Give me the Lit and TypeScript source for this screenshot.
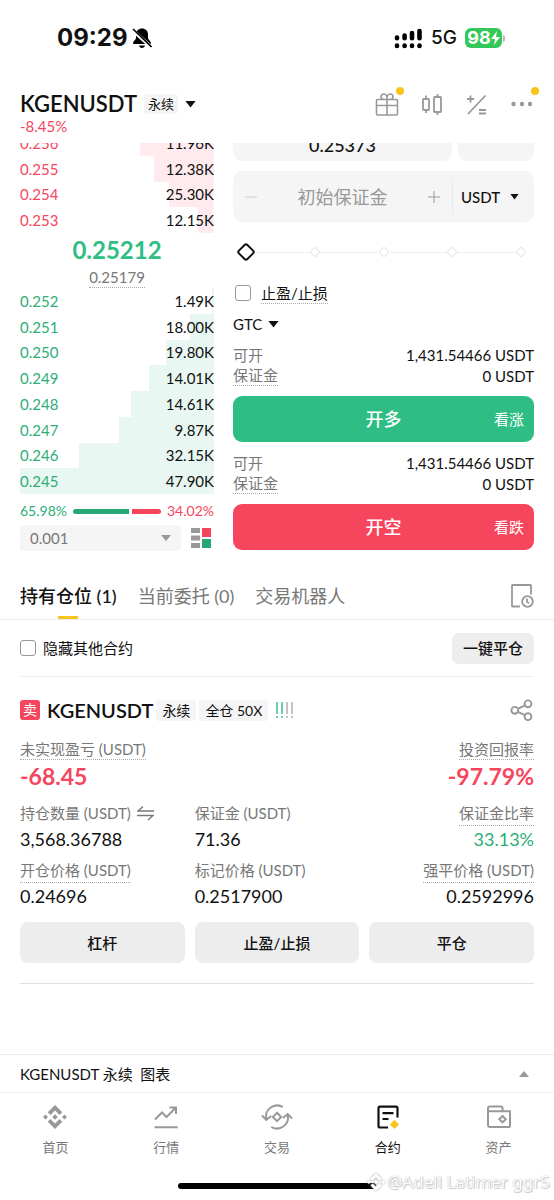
import { LitElement, html, css, svg, nothing } from "lit";
import { customElement, property, state } from "lit/decorators.js";
import { classMap } from "lit/directives/class-map.js";

type Level = { price: string; size: string; depth: number };

const asks: Level[] = [
  { price: "0.256", size: "11.96K", depth: 38 },
  { price: "0.255", size: "12.38K", depth: 31 },
  { price: "0.254", size: "25.30K", depth: 23 },
  { price: "0.253", size: "12.15K", depth: 8 },
];

const bids: Level[] = [
  { price: "0.252", size: "1.49K", depth: 1 },
  { price: "0.251", size: "18.00K", depth: 12.5 },
  { price: "0.250", size: "19.80K", depth: 25 },
  { price: "0.249", size: "14.01K", depth: 33.5 },
  { price: "0.248", size: "14.61K", depth: 43 },
  { price: "0.247", size: "9.87K", depth: 49 },
  { price: "0.246", size: "32.15K", depth: 69.5 },
  { price: "0.245", size: "47.90K", depth: 100 },
];

const icons = {
  gift: svg`<g fill="none" stroke="#999" stroke-width="1.6"><rect x="1.5" y="7.5" width="21" height="15.5" rx="1"/><path d="M1.5 13.5h21M12 7.5V23"/><path d="M12 7.500C12.400 4 10.800 2 9 2S6 3.300 6 4.700 7 7.200 8.500 7.400M12 7.500C11.600 4 13.200 2 15 2s3 1.300 3 2.700-1 2.500-2.500 2.700"/></g>`,
  candles: svg`<g fill="none" stroke="#999" stroke-width="1.8"><rect x="3" y="7" width="6" height="11" rx=".8"/><rect x="14" y="5" width="7" height="15" rx=".8"/><path d="M6 3.500V7M6 18v3M17.500 2v3M17.500 20v3"/></g>`,
  calc: svg`<g fill="none" stroke="#999" stroke-width="1.8"><path d="M3 22 20.500 3.500M2 7h7M5.500 3.500v7M14 18h7M14 21.500h7"/></g>`,
  more: svg`<g fill="#999"><circle cx="3.500" cy="12" r="2.200"/><circle cx="12" cy="12" r="2.200"/><circle cx="20" cy="12" r="2.200"/></g>`,
  history: svg`<g fill="none" stroke="#999" stroke-width="1.8"><path d="M21 10.500V1.500a.5.5 0 0 0-.5-.5h-18a.5.5 0 0 0-.5.500V22a.5.5 0 0 0 .5.500H10"/><circle cx="17.500" cy="17.500" r="5.300"/><path d="M17 14.500v3.400l2 1.400"/></g>`,
  share: svg`<g fill="none" stroke="#999" stroke-width="1.900"><circle cx="4.800" cy="12.300" r="3.400"/><circle cx="18" cy="5.800" r="3.400"/><circle cx="18" cy="18.700" r="3.400"/><path d="M7.800 10.800l7.200-3.500M7.800 13.900l7.200 3.300"/></g>`,
  home: svg`<g fill="#999"><path d="M12 0l7.300 7.300-2.800 2.800L12 5.600 7.500 10.100 4.700 7.300zM12 24l-7.300-7.300 2.800-2.800L12 18.400l4.500-4.500 2.800 2.800zM12 9.200l2.800 2.800-2.800 2.800L9.200 12zM2.500 9.500L5 12l-2.500 2.500L0 12zM21.500 9.500L24 12l-2.500 2.500L19 12z"/></g>`,
  market: svg`<g fill="none" stroke="#999" stroke-width="2"><path d="M.5 22.200h23.200M1 14.500l7-7 4.500 4.500L22 2.500M15.500 2.600H22V9"/></g>`,
  trade: svg`<g fill="none" stroke="#999" stroke-width="2" stroke-linecap="round"><path d="M17 1.700A11 11 0 0 0 1.200 13.500M-2.500 11l3.800 4 4.200-3.500M7 22.300A11 11 0 0 0 22.800 10.500M26.500 13l-3.800-4-4.200 3.500"/><path d="M12 7.800l4.200 4.200-4.200 4.200L7.800 12z"/></g>`,
  futures: svg`<g fill="none" stroke="#111" stroke-width="2.200"><path d="M21.500 12.500V3.200a1.500 1.500 0 0 0-1.500-1.500H4a1.500 1.500 0 0 0-1.500 1.500V21A1.500 1.500 0 0 0 4 22.500h8M6.500 8.200h11M6.500 14h6"/></g><path fill="#f8c51c" d="M18.500 14.800l4.600 4.600-4.600 4.600-4.600-4.600z"/>`,
  wallet: svg`<g fill="none" stroke="#999" stroke-width="2"><path d="M1 6.200h22v14.800a1 1 0 0 1-1 1H3a2 2 0 0 1-2-2zM1 7V3a1.500 1.500 0 0 1 1.500-1.500H14a1.500 1.500 0 0 1 1.500 1.500v3"/><path d="M15.500 11l3.200 3.200-3.200 3.200-3.200-3.200z"/></g>`,
};

const icon = (name: keyof typeof icons) =>
  html`<svg viewBox="0 0 24 24" width="24" height="24" aria-hidden="true" overflow="visible">${icons[name]}</svg>`;

const base = css`
  :host {
    display: block;
    box-sizing: border-box;
  }
  *,
  *::before,
  *::after {
    box-sizing: border-box;
  }
  button,
  input,
  select {
    font: inherit;
    color: inherit;
    border: 0;
    margin: 0;
    padding: 0;
    background: none;
    border-radius: 0;
    outline: none;
  }
  select {
    appearance: none;
  }
  svg {
    display: block;
    flex: none;
  }
  .tick {
    appearance: none;
    flex: none;
    width: 16px;
    height: 16px;
    border: 1px solid #999;
    border-radius: 3px;
  }
  .hint {
    border-bottom: 1px dotted #aaa;
  }
  .caret {
    flex: none;
    width: 11px;
    height: 7px;
    background: #111;
    clip-path: polygon(0 0, 100% 0, 50% 100%);
  }
  .up {
    color: #2dae77;
  }
  .down {
    color: #f6465d;
  }
`;

@customElement("status-bar")
class StatusBar extends LitElement {
  static styles = [
    base,
    css`
      .bar {
        display: flex;
        align-items: center;
        justify-content: space-between;
        height: 76px;
        padding: 0 49px 0 57px;
        font-family: Inter, sans-serif;
      }
      .group {
        display: flex;
        align-items: center;
      }
      .time {
        font-size: 24px;
        font-weight: 700;
        margin-right: 4px;
      }
      .net {
        font-size: 19px;
        font-weight: 500;
        margin: 0 8px;
      }
      .battery {
        display: flex;
        align-items: center;
        justify-content: center;
        width: 37px;
        height: 20px;
        border-radius: 6px;
        background: #34c759;
        color: #fff;
        font-size: 18px;
        font-weight: 700;
      }
      .cap {
        width: 2px;
        height: 7px;
        margin-left: 1px;
        border-radius: 0 2px 2px 0;
        background: #bbb;
      }
    `,
  ];
  render() {
    return html`<div class="bar">
      <div class="group">
        <span class="time">09:29</span>
        <svg width="20" height="22" viewBox="0 0 20 22" aria-hidden="true">
          <path d="M10 1.500c-3.600 0-6 2.500-6 6v3.500c0 1.800-3 3.500-3 5 0 .7.500 1 1.200 1h15.600c.7 0 1.200-.3 1.200-1 0-1.500-3-3.200-3-5V7.500c0-3.500-2.400-6-6-6zM7 18.500h6c-.3 1.500-1.400 2.500-3 2.500s-2.700-1-3-2.500z" />
          <path d="M0 2.500L19 20" stroke="#fff" stroke-width="3.500" />
          <path d="M1 2l18.500 18" stroke="#000" stroke-width="1.700" />
        </svg>
      </div>
      <div class="group">
        <svg width="29" height="21" viewBox="0 0 29 21" aria-hidden="true">
          <g stroke="#000" stroke-width="4.600" stroke-linecap="round">
            <path d="M3 9.500v.8M10.600 7.500v2.800M18 5v5.300M25.500 3v7.300M3 17.500v.5M10.600 17.500v.5M18 17.500v.5M25.500 17.500v.5" />
          </g>
        </svg>
        <span class="net">5G</span>
        <span class="battery">98<svg width="9" height="14" viewBox="0 0 9 14" aria-hidden="true"><path fill="#fff" d="M6 0L0 8h4l-1 6 6-8H5z" /></svg></span>
        <span class="cap"></span>
      </div>
    </div>`;
  }
}

@customElement("order-book")
class OrderBook extends LitElement {
  static styles = [
    base,
    css`
      .asks {
        display: flex;
        flex-direction: column;
        justify-content: flex-end;
        height: 90px;
        overflow: hidden;
      }
      .levels {
        display: grid;
        flex: none;
        grid-auto-rows: 1fr;
      }
      .asks .levels {
        height: 103px;
      }
      .bids {
        height: 206px;
      }
      .level {
        display: flex;
        align-items: center;
        justify-content: space-between;
        background: linear-gradient(var(--tint), var(--tint)) right / var(--depth) 100% no-repeat;
      }
      .asks .level {
        --tint: #ffebee;
      }
      .bids .level {
        --tint: #e9f7f2;
      }
      .mid {
        display: flex;
        flex-direction: column;
        align-items: center;
        height: 55px;
      }
      .last {
        color: #2ebd85;
        font-size: 24px;
        font-weight: 700;
        line-height: 34px;
      }
      .mark {
        color: #777;
        line-height: 20px;
      }
      .ratio {
        display: flex;
        align-items: center;
        gap: 6px;
        height: 31px;
        padding-top: 3px;
        font-size: 14px;
      }
      .split {
        display: grid;
        grid-template-columns: 66fr 34fr;
        gap: 3px;
        flex: 1;
        height: 5px;
      }
      .buy {
        background: #27a776;
        border-radius: 3px 0 0 3px;
      }
      .sell {
        background: #f5455c;
        border-radius: 0 3px 3px 0;
      }
      .step {
        display: flex;
        align-items: center;
        gap: 10px;
      }
      .pick {
        flex: 1;
        min-width: 0;
        height: 26px;
        padding: 0 10px;
        border-radius: 4px;
        color: #777;
        background: #f5f5f5
          url("data:image/svg+xml,%3Csvg xmlns='http://www.w3.org/2000/svg' width='10' height='6'%3E%3Cpath d='M0 0h10L5 6z' fill='%23999'/%3E%3C/svg%3E")
          right 10px center no-repeat;
      }
    `,
  ];
  level(l: Level, tone: string) {
    return html`<div class="level" style="--depth:${l.depth}%">
      <span class=${tone}>${l.price}</span><span>${l.size}</span>
    </div>`;
  }
  render() {
    return html`
      <div class="asks"><div class="levels">${asks.map((l) => this.level(l, "down"))}</div></div>
      <div class="mid"><span class="last">0.25212</span><span class="mark hint">0.25179</span></div>
      <div class="levels bids">${bids.map((l) => this.level(l, "up"))}</div>
      <div class="ratio">
        <span class="up">65.98%</span>
        <span class="split"><span class="buy"></span><span class="sell"></span></span>
        <span class="down">34.02%</span>
      </div>
      <div class="step">
        <select class="pick" aria-label="价格精度"><option>0.001</option></select>
        <svg width="23" height="20" viewBox="0 0 23 20" aria-hidden="true">
          <path fill="#999" d="M0 0h9v5H0zM0 7.500h9v5H0zM0 15h9v5H0z" />
          <path fill="#f5455c" d="M11 0h9v9h-9z" /><path fill="#27a776" d="M11 11h9v9h-9z" />
        </svg>
      </div>
    `;
  }
}

@customElement("order-form")
class OrderForm extends LitElement {
  @state() percent = 0;
  static styles = [
    base,
    css`
      .clip {
        display: grid;
        grid-template-columns: minmax(0, 219fr) minmax(0, 76fr);
        gap: 6px;
        align-content: end;
        height: 18px;
        overflow: hidden;
      }
      .box {
        height: 51px;
        min-width: 0;
        border-radius: 9px;
        background: #f5f5f5;
      }
      .price {
        width: 100%;
        padding-top: 18px;
        text-align: center;
        font-size: 18px;
        font-weight: 500;
      }
      .amount {
        display: flex;
        align-items: center;
        margin-top: 10px;
      }
      .sign {
        width: 36px;
        height: 36px;
        display: grid;
        place-items: center;
      }
      .field {
        flex: 1;
        min-width: 0;
        text-align: center;
        font-size: 18px;
        height: 36px;
      }
      .field::placeholder {
        color: #999;
        opacity: 1;
      }
      .unit {
        position: relative;
        display: flex;
        align-items: center;
        width: 82px;
        height: 37px;
        border-left: 1px solid #eaeaea;
      }
      .unit select {
        width: 100%;
        height: 100%;
        padding-left: 8px;
        font-size: 15px;
        font-weight: 500;
      }
      .unit .caret {
        position: absolute;
        right: 15px;
        width: 9px;
        height: 6px;
        pointer-events: none;
      }
      .slider {
        position: relative;
        display: flex;
        align-items: center;
        justify-content: space-between;
        height: 20px;
        margin: 20px 6px 0;
        background: linear-gradient(#eee, #eee) center / calc(100% - 20px) 1px no-repeat;
      }
      .stop {
        width: 8px;
        height: 8px;
        margin: 0 3px;
        border: 1px solid #e6e6e6;
        border-radius: 2px;
        background: #fff;
        rotate: 45deg;
      }
      .slider input {
        appearance: none;
        position: absolute;
        inset: 0;
        width: 100%;
        margin: 0;
      }
      .slider input::-webkit-slider-thumb {
        appearance: none;
        width: 14px;
        height: 14px;
        border: 2px solid #111;
        border-radius: 3px;
        background: #fff;
        rotate: 45deg;
      }
      .check {
        display: flex;
        align-items: center;
        gap: 10px;
        height: 20px;
        margin: 21px 0 0 2px;
      }
      .tif {
        position: relative;
        display: flex;
        align-items: center;
        gap: 5px;
        width: 46px;
        height: 20px;
        margin: 11px 0 11px;
      }
      .tif select {
        width: 100%;
        height: 20px;
      }
      .tif .caret {
        position: absolute;
        right: 0;
        pointer-events: none;
      }
      .info {
        display: grid;
        grid-template-columns: auto 1fr;
        align-items: center;
        row-gap: 1px;
        line-height: 20px;
      }
      .info span {
        color: #777;
        justify-self: start;
        line-height: 19px;
      }
      .info b {
        font-weight: 400;
        text-align: right;
      }
      .go {
        display: grid;
        grid-template-columns: 1fr auto 1fr;
        align-items: center;
        width: 100%;
        height: 46px;
        padding: 0 10px;
        border-radius: 9px;
        color: #fff;
        font-size: 18px;
        font-weight: 500;
        margin: 10px 0 11px;
      }
      .go:last-child {
        margin-bottom: 0;
      }
      .long {
        background: #2ebd85;
      }
      .short {
        background: #f6465d;
      }
      .go small {
        grid-column: 3;
        justify-self: end;
        font-size: 15px;
        font-weight: 400;
      }
      .go span {
        grid-column: 2;
      }
    `,
  ];
  info() {
    return html`<div class="info">
      <span>可开</span><b>1,431.54466 USDT</b><span class="hint">保证金</span><b>0 USDT</b>
    </div>`;
  }
  render() {
    return html`
      <div class="clip">
        <input class="box price" aria-label="价格" value="0.25373" />
        <button class="box" aria-label="价格类型"></button>
      </div>
      <div class="box amount">
        <button class="sign" aria-label="减少"><svg width="12" height="12"><path d="M0 6h12" stroke="#ccc" /></svg></button>
        <input class="field" aria-label="初始保证金" placeholder="初始保证金" />
        <button class="sign" aria-label="增加"><svg width="12" height="12"><path d="M0 6h12M6 0v12" stroke="#999" /></svg></button>
        <span class="unit"><select aria-label="单位"><option>USDT</option></select><i class="caret"></i></span>
      </div>
      <div class="slider">
        ${[0, 1, 2, 3, 4].map(() => html`<i class="stop"></i>`)}
        <input type="range" aria-label="仓位比例" min="0" max="100" .value=${String(this.percent)}
          @input=${(e: Event) => (this.percent = +(e.target as HTMLInputElement).value)} />
      </div>
      <label class="check"><input class="tick" type="checkbox" /><span class="hint">止盈/止损</span></label>
      <div class="tif"><select aria-label="有效时间"><option>GTC</option></select><i class="caret"></i></div>
      ${this.info()}
      <button class="go long"><span>开多</span><small>看涨</small></button>
      ${this.info()}
      <button class="go short"><span>开空</span><small>看跌</small></button>
    `;
  }
}

@customElement("position-card")
class PositionCard extends LitElement {
  static styles = [
    base,
    css`
      .head {
        display: flex;
        align-items: center;
        height: 24px;
        margin-top: 21px;
      }
      .side {
        width: 20px;
        height: 20px;
        margin-right: 7px;
        border-radius: 3px;
        background: #f6465d;
        color: #fff;
        font-size: 14px;
        line-height: 20px;
        text-align: center;
      }
      .name {
        margin: 0 3px 0 0;
        font-size: 20px;
        font-weight: 600;
      }
      .tag {
        height: 21px;
        margin-right: 3px;
        padding: 0 6px;
        border-radius: 3px;
        background: #f5f5f5;
        font-size: 14px;
        line-height: 21px;
      }
      .risk {
        margin-left: 5px;
      }
      .share {
        margin-left: auto;
      }
      .stats {
        display: grid;
        grid-template-columns: 1fr 1fr 1fr;
        column-gap: 10px;
        margin: 0;
      }
      .wide {
        grid-template-columns: 1fr 1fr;
        margin: 16px 0 9px;
      }
      .stat {
        display: flex;
        flex-direction: column;
        align-items: flex-start;
        height: 57px;
      }
      .wide .stat {
        height: 54px;
      }
      .stat:last-child {
        align-items: flex-end;
      }
      dt {
        display: flex;
        align-items: center;
        gap: 6px;
        height: 25px;
        color: #777;
        white-space: nowrap;
        border-bottom: 1px solid transparent;
      }
      dt.hint {
        border-bottom: 1px dotted #aaa;
      }
      dd {
        margin: 0;
        font-size: 18px;
        line-height: 26px;
      }
      .wide dd {
        font-size: 23px;
        font-weight: 700;
        line-height: 32px;
      }
      .actions {
        display: grid;
        grid-template-columns: 1fr 1fr 1fr;
        gap: 10px;
        padding-bottom: 20px;
        margin-top: 7px;
        border-bottom: 1px solid #e0e0e0;
      }
      .act {
        height: 41px;
        border-radius: 8px;
        background: #ededed;
        font-weight: 500;
      }
    `,
  ];
  stat(label: string, value: string, hint = false, tone = "", swap = false) {
    return html`<div class="stat">
      <dt class=${classMap({ hint })}>
        ${label}
        ${swap
          ? html`<svg width="17" height="15" viewBox="0 0 17 15"><path d="M17 5H1l5-4.500M0 9.500h16l-5 4.500" fill="none" stroke="#777" stroke-width="1.400" /></svg>`
          : nothing}
      </dt>
      <dd class=${tone}>${value}</dd>
    </div>`;
  }
  render() {
    return html`
      <div class="head">
        <span class="side">卖</span>
        <h2 class="name">KGENUSDT</h2>
        <span class="tag">永续</span><span class="tag">全仓 50X</span>
        <svg class="risk" width="17" height="16" aria-hidden="true">
          <g stroke-width="1.400" stroke-dasharray="12 2 2 9">
            <path d="M1 0v16M6 0v16" stroke="#2ebd85" /><path d="M11 0v16M16 0v16" stroke="#aaa" />
          </g>
        </svg>
        <button class="share" aria-label="分享">${icon("share")}</button>
      </div>
      <dl class="stats wide">
        ${this.stat("未实现盈亏 (USDT)", "-68.45", true, "down")} ${this.stat("投资回报率", "-97.79%", true, "down")}
      </dl>
      <dl class="stats">
        ${this.stat("持仓数量 (USDT)", "3,568.36788", false, "", true)} ${this.stat("保证金 (USDT)", "71.36")}
        ${this.stat("保证金比率", "33.13%", true, "up")}
      </dl>
      <dl class="stats">
        ${this.stat("开仓价格 (USDT)", "0.24696", true)} ${this.stat("标记价格 (USDT)", "0.2517900")}
        ${this.stat("强平价格 (USDT)", "0.2592996", true)}
      </dl>
      <div class="actions">
        <button class="act">杠杆</button><button class="act">止盈/止损</button><button class="act">平仓</button>
      </div>
    `;
  }
}

@customElement("bottom-nav")
class BottomNav extends LitElement {
  @property() active = "合约";
  static styles = [
    base,
    css`
      .chart {
        display: flex;
        align-items: center;
        justify-content: space-between;
        width: 100%;
        height: 39px;
        padding: 0 25px 0 20px;
        border-top: 1px solid #eaeaea;
        border-bottom: 1px solid #f0f0f0;
        white-space: pre;
      }
      .chart .caret {
        width: 10px;
        height: 6px;
        background: #999;
        rotate: 180deg;
      }
      .nav {
        display: grid;
        grid-template-columns: repeat(5, 1fr);
        padding-top: 12px;
      }
      .item {
        display: flex;
        flex-direction: column;
        align-items: center;
        gap: 8px;
        color: #777;
        font-size: 13px;
        line-height: 20px;
        text-decoration: none;
      }
      .on {
        color: #111;
      }
      .foot {
        position: relative;
        display: flex;
        justify-content: center;
        height: 43px;
        padding-top: 26px;
      }
      .grip {
        width: 198px;
        height: 6px;
        border-radius: 3px;
        background: #000;
      }
      .credit {
        position: absolute;
        right: 4px;
        bottom: 6px;
        display: flex;
        align-items: center;
        gap: 2px;
        color: #fff;
        font: 17px / 24px "Noto Sans", sans-serif;
        text-shadow: 0 0 1px #999, 1px 1px 1px #ccc;
      }
      .credit svg {
        filter: drop-shadow(0 0 1px #999);
      }
    `,
  ];
  render() {
    const items: [keyof typeof icons, string][] = [
      ["home", "首页"],
      ["market", "行情"],
      ["trade", "交易"],
      ["futures", "合约"],
      ["wallet", "资产"],
    ];
    return html`
      <button class="chart"><span>KGENUSDT 永续  图表</span><i class="caret"></i></button>
      <nav class="nav">
        ${items.map(
          ([name, label]) =>
            html`<a href="#" class=${classMap({ item: true, on: label === this.active })}>${icon(name)}<span>${label}</span></a>`,
        )}
      </nav>
      <div class="foot">
        <div class="grip"></div>
        <div class="credit">
          <svg width="18" height="18" viewBox="0 0 24 24" aria-hidden="true">
            <path fill="#fff" d="M12 0l7.300 7.300-2.800 2.800L12 5.600 7.500 10.100 4.700 7.300zM12 24l-7.300-7.300 2.800-2.800L12 18.400l4.500-4.500 2.800 2.800zM12 9.200l2.800 2.800-2.800 2.800L9.200 12zM2.500 9.500L5 12l-2.500 2.500L0 12zM21.500 9.500L24 12l-2.500 2.500L19 12z" />
          </svg>
          <span>@Adell Latimer ggr5</span>
        </div>
      </div>
    `;
  }
}

@customElement("app-root")
class AppRoot extends LitElement {
  @state() tab = 0;
  static styles = [
    base,
    css`
      :host {
        display: flex;
        flex-direction: column;
        min-height: 100vh;
        background: #fff;
        color: #111;
        font: 15px / 20px Lato, "Noto Sans CJK SC", sans-serif;
      }
      .top {
        display: flex;
        align-items: center;
        height: 30px;
        margin: 13px 20px 0;
      }
      .pair {
        margin: 0 7px 0 0;
        font-size: 22px;
        font-weight: 600;
      }
      .tag {
        height: 20px;
        padding: 0 4px;
        margin-right: 7px;
        border-radius: 3px;
        background: #f5f5f5;
        font-size: 13px;
      }
      .tools {
        display: flex;
        gap: 21px;
        margin-left: auto;
      }
      .tool {
        position: relative;
      }
      .dot::after {
        content: "";
        position: absolute;
        top: -5px;
        right: -5px;
        width: 8px;
        height: 8px;
        border-radius: 4px;
        background: #f8c51c;
      }
      .change {
        height: 24px;
        padding: 0 20px;
        font-size: 15px;
        line-height: 15px;
      }
      .trade {
        display: grid;
        grid-template-columns: minmax(0, 194fr) minmax(0, 301fr);
        gap: 19px;
        padding: 0 20px;
      }
      .tabs {
        display: flex;
        gap: 21px;
        height: 48px;
        margin-top: 21px;
        padding: 0 20px;
        border-bottom: 1px solid #eaeaea;
        font-size: 18px;
      }
      .tab {
        position: relative;
        color: #777;
      }
      .sel {
        color: #111;
        font-weight: 500;
      }
      .sel::after {
        content: "";
        position: absolute;
        left: calc(50% - 10px);
        bottom: 0;
        width: 20px;
        height: 3px;
        background: #f8c51c;
      }
      .log {
        margin-left: auto;
      }
      .body {
        padding: 0 20px;
      }
      .filter {
        display: flex;
        align-items: center;
        justify-content: space-between;
        height: 57px;
        border-bottom: 1px solid #eee;
      }
      .only {
        display: flex;
        align-items: center;
        gap: 7px;
      }
      .close {
        height: 31px;
        padding: 0 11px;
        border-radius: 7px;
        background: #ededed;
        font-weight: 500;
      }
      .bottom {
        margin-top: auto;
      }
    `,
  ];
  render() {
    const tabs = ["持有仓位 (1)", "当前委托 (0)", "交易机器人"];
    return html`
      <status-bar></status-bar>
      <header class="top">
        <h1 class="pair">KGENUSDT</h1>
        <span class="tag">永续</span><i class="caret"></i>
        <div class="tools">
          <button class="tool dot" aria-label="奖励">${icon("gift")}</button>
          <button class="tool" aria-label="K线">${icon("candles")}</button>
          <button class="tool" aria-label="计算器">${icon("calc")}</button>
          <button class="tool dot" aria-label="更多">${icon("more")}</button>
        </div>
      </header>
      <div class="change down">-8.45%</div>
      <main>
        <section class="trade">
          <order-book></order-book>
          <order-form></order-form>
        </section>
        <div class="tabs">
          ${tabs.map(
            (t, i) =>
              html`<button class=${classMap({ tab: true, sel: i === this.tab })} @click=${() => (this.tab = i)}>${t}</button>`,
          )}
          <button class="log" aria-label="历史">${icon("history")}</button>
        </div>
        <section class="body">
          <div class="filter">
            <label class="only"><input class="tick" type="checkbox" />隐藏其他合约</label>
            <button class="close">一键平仓</button>
          </div>
          <position-card></position-card>
        </section>
      </main>
      <bottom-nav class="bottom"></bottom-nav>
    `;
  }
}
